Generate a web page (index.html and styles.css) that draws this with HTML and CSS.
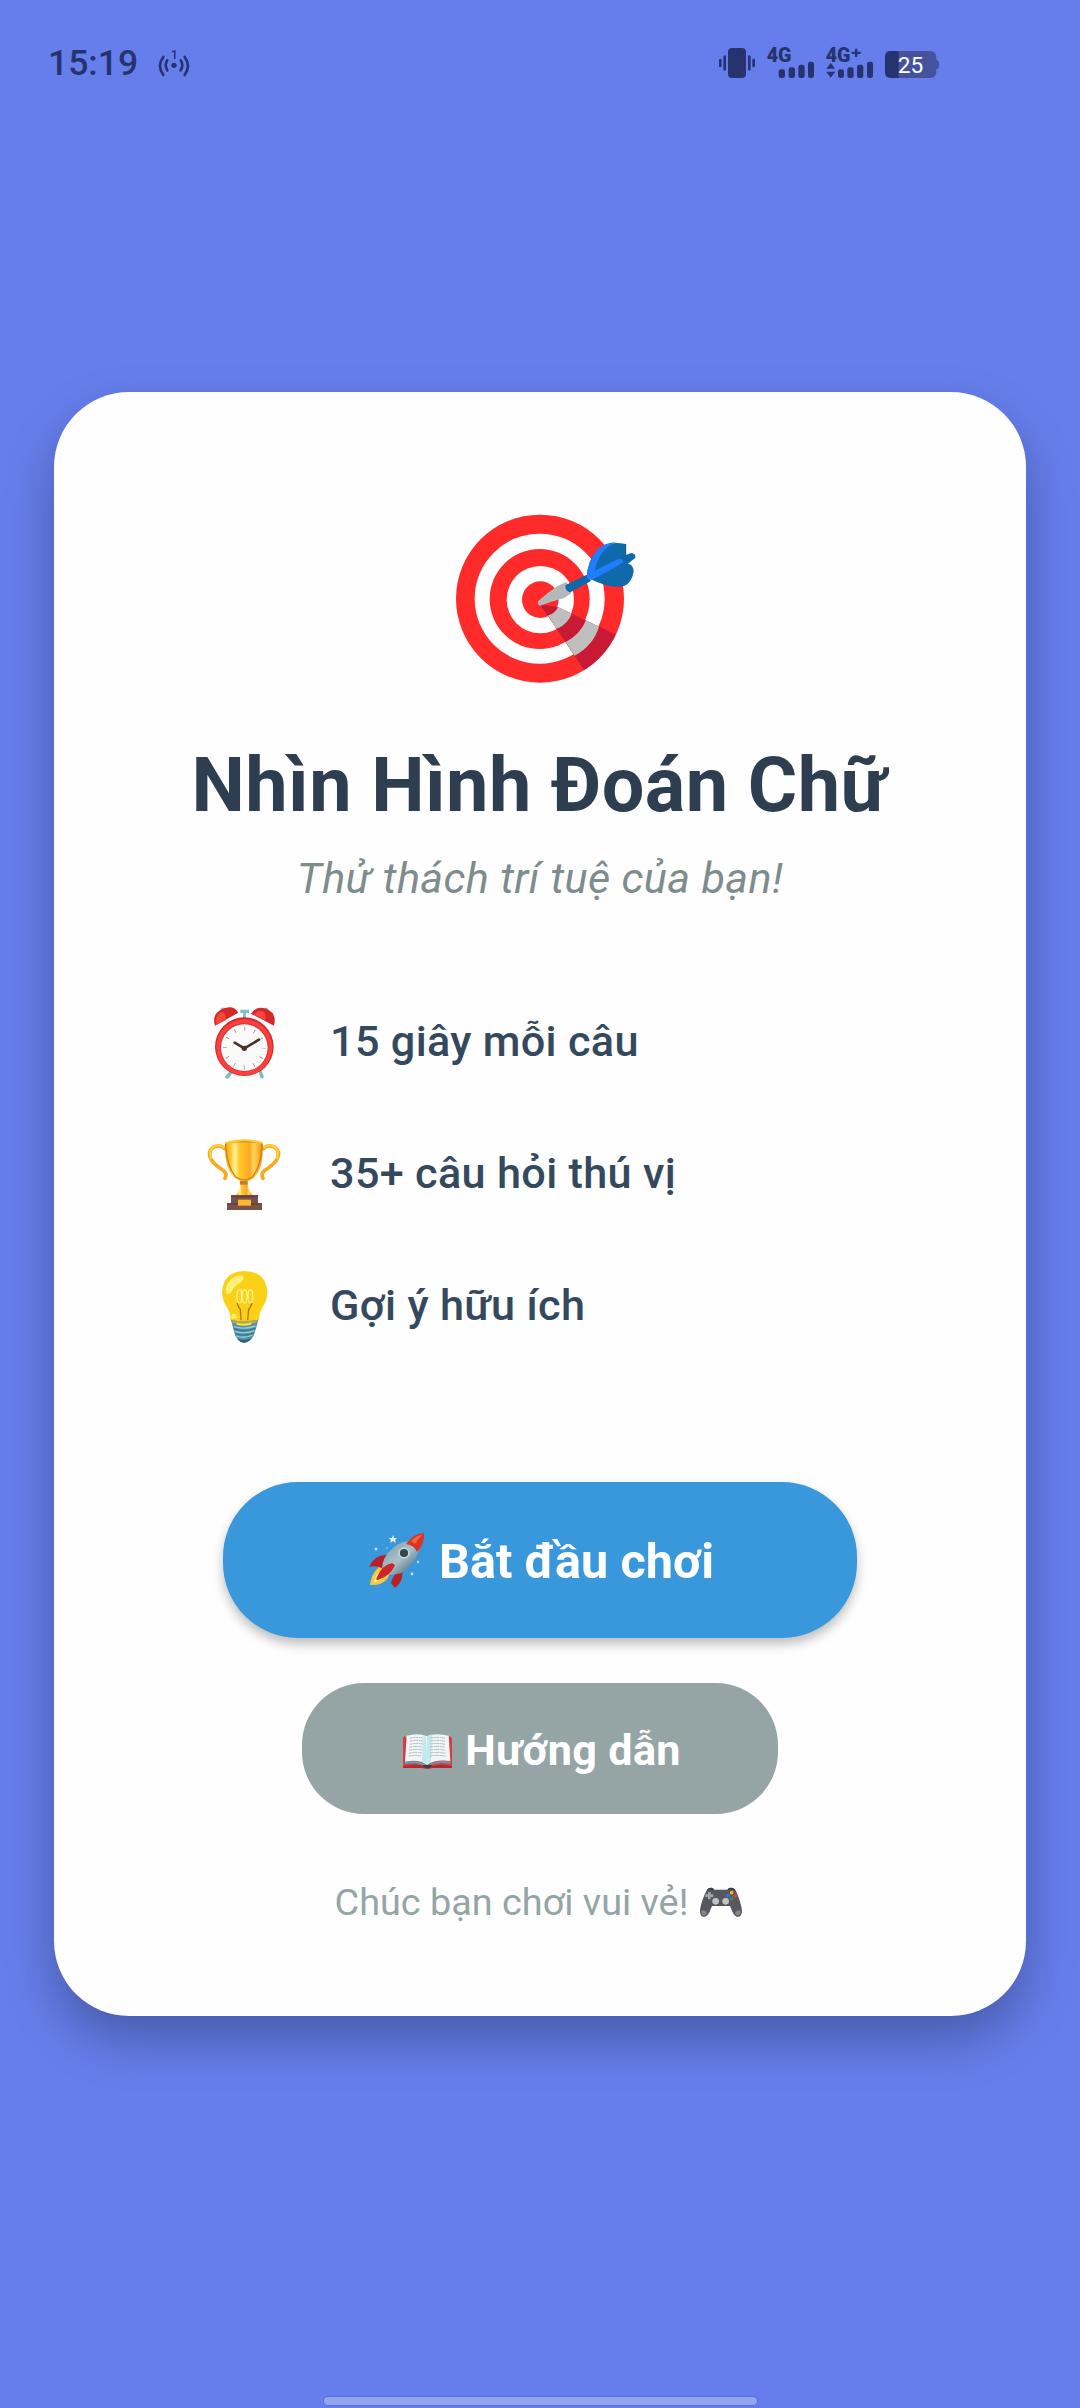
FILE: index.html
```html
<!DOCTYPE html>
<html lang="vi">
<head>
<meta charset="utf-8">
<title>Nhìn Hình Đoán Chữ</title>
<link rel="stylesheet" href="styles.css">
</head>
<body>
<div class="screen">
  <header class="status">
    <span class="time">15:19</span>
    <svg class="hotspot" viewBox="384 54 96 90" width="32" height="30">
      <circle cx="432" cy="106" r="8" fill="#27336e"/>
      <g fill="none" stroke="#27336e" stroke-width="8" stroke-linecap="round">
        <path d="M412 91Q402 105 412 121M452 91Q462 105 452 121M400 81Q380 107 400 135M464 81Q484 107 464 135"/>
      </g>
      <text x="422" y="88" class="tiny">1</text>
    </svg>
    <div class="status-right">
      <svg viewBox="60 54 108 90" width="36" height="30" fill="#27336e">
        <rect x="87" y="54" width="54" height="90" rx="12"/>
        <rect x="73" y="76" width="8" height="46" rx="4"/><rect x="60" y="86" width="8" height="26" rx="4"/>
        <rect x="147" y="76" width="8" height="46" rx="4"/><rect x="160" y="86" width="8" height="26" rx="4"/>
      </svg>
      <svg viewBox="204 54 141 90" width="47" height="30" fill="#27336e">
        <text x="203" y="97" class="net">4G</text>
        <rect x="239" y="118" width="19" height="26" rx="7"/><rect x="269" y="112" width="19" height="32" rx="7"/>
        <rect x="298" y="104" width="19" height="40" rx="7"/><rect x="327" y="95" width="18" height="49" rx="7"/>
      </svg>
      <svg viewBox="384 54 141 90" width="47" height="30" fill="#27336e">
        <text x="383" y="97" class="net">4G</text>
        <path d="M471 56h7v9h10v7H478v9h-7v-9H461v-7h10zM398 98l13 18H385zM385 125h27l-14 18z"/>
        <rect x="420" y="118" width="18" height="26" rx="7"/><rect x="448" y="112" width="19" height="32" rx="7"/>
        <rect x="477" y="104" width="19" height="40" rx="7"/><rect x="507" y="95" width="18" height="49" rx="7"/>
      </svg>
      <svg viewBox="555 54 162 90" width="54" height="30">
        <path d="M707 89q10 1 10 9v11q0 8-10 9z" fill="#45539d"/>
        <rect x="555" y="63" width="154" height="81" rx="17" fill="#45539d"/>
        <path d="M596 63H572q-17 0-17 17v47q0 17 17 17h24z" fill="#27336e"/>
        <text x="593" y="128" class="level">25</text>
      </svg>
    </div>
  </header>

  <main class="card">
    <svg class="target" viewBox="30 60 600 540" width="200" height="180">
      <defs><clipPath id="disc"><circle cx="330" cy="326" r="252"/></clipPath></defs>
      <circle cx="330" cy="326" r="252" fill="#ff2a2a"/>
      <circle cx="329" cy="326" r="195" fill="#fff"/>
      <circle cx="329" cy="327" r="150" fill="#ff2a2a"/>
      <circle cx="331" cy="329" r="101" fill="#fff"/>
      <circle cx="331" cy="329" r="55" fill="#ff2a2a"/>
      <g clip-path="url(#disc)">
        <path d="M328 342L385 352L600 454L474 558L352 375Z" fill="#c91a35"/>
        <path d="M384 351L425 371Q414 400 384 415L378 414L354 376Q376 371 384 351ZM468 391L507 410Q490 466 434 497L407 456Q450 435 468 391Z" fill="#bfbfbf"/>
      </g>
      <path d="M325 333Q350 309 384 287L410 275L424 310L403 324Q365 334 331 347Q321 344 325 333Z" fill="#b5b8bb"/>
      <path d="M406 286L470 254L483 273L421 307Q406 305 406 286Z" fill="#0d68a8"/>
      <path d="M470 265Q472 211 504 177Q535 151 587 162V195L604 189Q618 190 616 203L594 221Q610 223 611 245Q605 277 584 287Q546 300 476 265Z" fill="#1069aa"/>
      <path d="M470 265Q472 211 504 177Q525 158 558 157Q508 178 494 242L564 207Q579 204 579 215Q578 221 484 270Z" fill="#217dfb"/>
      <path d="M587 162V195L575 207" fill="none" stroke="#0b568f" stroke-width="3"/>
    </svg>

    <h1>Nhìn Hình Đoán Chữ</h1>
    <p class="tagline">Thử thách trí tuệ của bạn!</p>

    <ul class="features">
      <li>
        <svg viewBox="54 48 216 216" width="72" height="72">
          <path d="M91 60l4-7h9l3 8M224 60l-1-7h8l7 8M122 240l-17 20q0 9 11 5l16-22zM205 243l7 22q11 3 9-7l-8-20z" fill="#80b9c4"/>
          <path d="M151 59h26v10h-9v18h-9V69h-8z" fill="#84bec8"/>
          <path d="M75 107Q64 72 97 57Q130 43 145 68ZM252 107Q262 69 228 56Q199 46 183 71Z" fill="#d52827"/>
          <path d="M80 104Q73 78 94 65Q109 67 107 91ZM191 72Q210 57 222 66Q228 75 225 91Z" fill="#fa443e"/>
          <circle cx="163" cy="170" r="88" fill="#d52b2b"/>
          <circle cx="163" cy="172" r="84" fill="#fb4140"/>
          <circle cx="163" cy="172" r="73" fill="#d83431"/>
          <circle cx="163" cy="173" r="70" fill="#fafafa"/>
          <circle cx="163" cy="174" r="58" fill="none" stroke="#a1887f" stroke-width="12" pathLength="120" stroke-dasharray="0.8 9.2" stroke-dashoffset=".4"/>
          <path d="M134 158L163 175L207 149" fill="none" stroke="#4e2d2b" stroke-width="8" stroke-linecap="round" stroke-linejoin="round"/>
          <circle cx="163" cy="175" r="8" fill="#4e2d2b"/>
        </svg>
        <span>15 giây mỗi câu</span>
      </li>
      <li>
        <svg viewBox="54 54 216 216" width="72" height="72">
          <defs><linearGradient id="cup"><stop offset="0" stop-color="#f9a51f"/><stop offset=".15" stop-color="#ffc928"/><stop offset=".27" stop-color="#fff0a0"/><stop offset=".38" stop-color="#ffca28"/><stop offset=".65" stop-color="#ffa726"/><stop offset=".76" stop-color="#ffd557"/><stop offset="1" stop-color="#ef930f"/></linearGradient></defs>
          <g fill="none" stroke-linecap="round">
            <path d="M104 86Q89 71 70 82Q50 96 65 121Q75 136 98 150Q113 160 105 175M220 86Q235 71 254 82Q274 96 259 121Q249 136 226 150Q211 160 219 175" stroke="#f8a91d" stroke-width="11"/>
            <path d="M101 82Q86 70 70 81Q54 92 64 115M223 82Q238 70 254 81Q270 92 260 115" stroke="#ffd232" stroke-width="6"/>
          </g>
          <path d="M105 69Q162 49 218 69Q222 147 189 176Q163 192 136 176Q102 146 105 69Z" fill="url(#cup)"/>
          <path d="M107 73Q111 64 162 65Q212 64 216 73Q214 139 187 171Q163 188 137 171Q110 139 107 73Z" fill="none" stroke="#d28116" stroke-width="4"/>
          <path d="M106 69Q162 53 217 69" fill="none" stroke="#ffcb2e" stroke-width="6"/>
          <path d="M151 183h21l2 18q6 17 15 26h-54q14-12 15-26z" fill="url(#cup)"/>
          <path d="M150 183h23v11h-23z" fill="#c9792c"/>
          <path d="M123 226h81v24h12v20H111v-20h12z" fill="#79524c"/>
          <path d="M123 226h81v6h-81zM111 250h105v4H111z" fill="#654039"/>
          <path d="M144 239h39v18h-39z" fill="#fcb92d"/>
        </svg>
        <span>35+ câu hỏi thú vị</span>
      </li>
      <li>
        <svg viewBox="54 60 216 216" width="72" height="72">
          <path d="M122 207Q127 223 132 245Q139 275 163 278Q187 275 195 245L206 207Z" fill="#518faa"/>
          <path d="M96 127Q99 65 164 63Q229 65 232 127Q231 153 218 171Q207 189 206 209Q163 218 122 209Q121 187 110 171Q97 151 96 127Z" fill="#fdd018"/>
          <path d="M109 129Q103 111 119 92Q134 75 156 77Q169 82 151 98Q133 108 124 125Q115 137 109 129ZM125 193Q137 187 142 204L125 206Z" fill="#fff177"/>
          <g fill="none" stroke="#fff38d" stroke-width="4"><ellipse cx="148" cy="139" rx="7" ry="20"/><ellipse cx="164" cy="139" rx="7" ry="20"/><ellipse cx="181" cy="139" rx="7" ry="20"/></g>
          <path d="M141 159Q146 174 151 178L153 211M186 159Q181 174 176 178L173 211" fill="none" stroke="#b9750d" stroke-width="4"/>
          <path d="M124 210Q163 218 204 209L198 219Q163 225 128 219Z" fill="#b6a94a"/>
          <path d="M140 218Q165 225 186 217L183 224Q160 230 140 224Z" fill="#ffe23d"/>
          <path d="M132 230Q163 240 197 228M134 244Q163 254 193 242M139 258Q163 267 187 255" fill="none" stroke="#93cbda" stroke-width="4"/>
          <path d="M133 236Q163 248 196 235M137 250Q163 261 190 249" fill="none" stroke="#347080" stroke-width="3"/>
          <path d="M142 266Q163 275 184 264Q173 278 163 278Q151 278 142 266Z" fill="#2b6071"/>
        </svg>
        <span>Gợi ý hữu ích</span>
      </li>
    </ul>

    <button class="btn btn-play">
      <svg viewBox="0 0 62 62" width="62" height="62">
        <defs><linearGradient id="hull" x1="0" y1="0" x2="1" y2="1"><stop offset=".2" stop-color="#8fa7b2"/><stop offset=".5" stop-color="#a9c3cd"/><stop offset=".85" stop-color="#587583"/></linearGradient></defs>
        <path d="M13 36Q5 43 4 54Q16 55 22 47L25 38Z" fill="#fbc638"/>
        <path d="M14 40Q8 46 8 51Q16 50 20 43Z" fill="#fff29a"/>
        <path d="M21 24Q9 23 3 36Q11 34 18 38ZM33 39Q27 44 25 52L29 57Q39 49 36 36Z" fill="#b92025"/>
        <path d="M16 38Q16 26 27 17Q37 9 43 11L53 19Q49 33 36 42L25 44Z" fill="url(#hull)"/>
        <path d="M40 13Q48 2 58 2Q59 13 51 21Q48 14 40 13Z" fill="#db3525"/>
        <path d="M45 10Q52 3 56 4Q52 8 49 13Z" fill="#f36345"/>
        <circle cx="38" cy="22" r="5.8" fill="#c6d5da"/><circle cx="38" cy="22" r="4.1" fill="#37474f"/>
        <path d="M26 32Q16 34 11 46Q9 51 14 48Q25 44 29 34Z" fill="#cf2529"/>
        <path d="M27 4l1 3h3l-2 2 1 3-3-2-3 2 1-3-2-2h3z" fill="#e7f6ff"/>
        <g fill="#b9e4fb"><circle cx="10" cy="18" r="1.4"/><circle cx="52" cy="31" r="1.2"/><circle cx="46" cy="43" r="1.4"/><circle cx="21" cy="17" r=".7"/></g>
      </svg>
      <span>Bắt đầu chơi</span>
    </button>
    <button class="btn btn-guide">
      <svg viewBox="354 195 168 150" width="56" height="50">
        <path d="M366 234l5-6 67 88 67-88 8 6v90h-58q-8 0-16 3-9-3-16-3h-57z" fill="#d63c42"/>
        <path d="M367 319q43-9 60 0h24q26-9 61 0v5h-58l-15 2-15-2h-57z" fill="#a92d35"/>
        <path d="M372 306Q414 299 439 317Q465 299 509 305V311Q463 304 439 321Q411 304 371 312Z" fill="#52a8c2"/>
        <path d="M377 227Q415 217 438 229Q462 217 503 227L508 303Q465 297 439 314Q414 297 372 305Z" fill="#f0f6f7"/>
        <path d="M428 224Q438 227 438 314L423 307ZM438 229Q445 223 452 224L450 305L439 314Z" fill="#bfe8ef"/>
        <path d="M425 315h28q-1 7-14 10-13-4-14-10z" fill="#3b3d42"/>
        <g fill="none" stroke="#939ca0" stroke-width="2" stroke-dasharray="9 2 5 1">
          <path d="M386 235q18-5 40-1M386 244q18-5 40-1M386 253q18-5 40-1M385 262q18-5 39-1M384 271q18-5 40-1M383 280q18-5 40-1M383 289q18-5 38-1M449 234q22-4 43 1M449 243q22-4 43 1M449 252q22-4 44 1M448 261q22-4 45 1M448 270q22-4 46 1M448 279q22-4 47 1M447 288q22-4 49 1"/>
        </g>
      </svg>
      <span>Hướng dẫn</span>
    </button>

    <p class="wish">
      <span>Chúc bạn chơi vui vẻ!</span>
      <svg viewBox="1254 660 144 132" width="48" height="44">
        <path d="M1283 691Q1288 681 1301 684L1306 689H1345L1350 684Q1364 680 1370 691Q1386 727 1389 752Q1389 770 1376 771Q1367 770 1361 757L1353 738H1299L1291 757Q1285 770 1274 771Q1262 769 1263 750Q1267 722 1283 691Z" fill="#56575f"/>
        <path d="M1267 754Q1271 748 1278 752L1284 758Q1281 767 1273 767Q1267 765 1267 754ZM1385 754Q1381 748 1374 752L1368 758Q1371 767 1378 767Q1385 765 1385 754Z" fill="#85868b"/>
        <path d="M1283 691Q1288 681 1301 684L1306 689H1291ZM1370 691Q1364 680 1350 684L1345 689H1362Z" fill="#3b3c43"/>
        <path d="M1287 696h8v7h8v8h-8v7h-8v-7h-8v-8h8z" fill="#a5a6ab"/>
        <circle cx="1310" cy="724" r="10" fill="#c3c3c5"/><circle cx="1340" cy="724" r="10" fill="#c3c3c5"/>
        <circle cx="1358" cy="698" r="5.5" fill="#f3b51a"/><circle cx="1347" cy="707" r="5.5" fill="#2d75df"/><circle cx="1369" cy="708" r="5.5" fill="#e43a35"/><circle cx="1358" cy="716" r="5.5" fill="#28964b"/>
      </svg>
    </p>
  </main>

  <div class="home-bar"></div>
</div>
</body>
</html>
```
FILE: styles.css
```css
* { box-sizing: border-box; }

body {
  margin: 0;
  background: #657eeb;
  font-family: Roboto, "Noto Sans", sans-serif;
}

.screen {
  display: flex;
  flex-direction: column;
  align-items: center;
  width: 1080px;
  height: 2408px;
  overflow: hidden;
}

svg { display: block; flex: none; overflow: visible; }

.status {
  display: flex;
  align-items: center;
  align-self: stretch;
  height: 126px;
  padding: 0 141px 0 48px;
  color: #27336e;
}

.time {
  width: 110px;
  font-size: 35.5px;
  font-weight: 500;
}

.status-right {
  display: flex;
  gap: 12px;
  margin-left: auto;
}

.tiny { font-size: 38px; font-weight: 500; fill: #27336e; }
.net { font-size: 59px; font-weight: 900; }
.level { font-size: 68px; font-weight: 400; fill: #fff; }

.card {
  display: flex;
  flex-direction: column;
  align-items: center;
  width: 972px;
  height: 1624px;
  margin-top: 266px;
  padding-top: 118px;
  border-radius: 75px;
  background: #fefefe;
  box-shadow: 0 24px 50px rgba(0, 0, 0, 0.27);
}

h1 {
  width: 697px;
  margin: 50px 0 0;
  overflow: hidden;
  color: #2c3e50;
  font-size: 75.6px;
  font-weight: 700;
  letter-spacing: 0.45px;
  line-height: 90px;
  white-space: nowrap;
}

.tagline {
  margin: 24px 0 0;
  color: #7f8c8d;
  font-size: 43.2px;
  font-style: italic;
  letter-spacing: 0.36px;
  line-height: 50px;
}

.features {
  display: flex;
  flex-direction: column;
  align-self: stretch;
  gap: 60px;
  margin: 102px 0 0;
  padding: 0 0 0 154px;
  list-style: none;
}

.features li {
  display: flex;
  gap: 50px;
  color: #34495e;
  font-size: 43.2px;
  font-weight: 500;
  letter-spacing: 0.33px;
  line-height: 72px;
}

.btn {
  display: flex;
  flex: none;
  align-items: center;
  justify-content: center;
  padding: 3px 0 0;
  border: 0;
  color: #fff;
  font-family: inherit;
  font-weight: 700;
}

.btn-play {
  gap: 11px;
  width: 634px;
  height: 156px;
  margin-top: 140px;
  border-radius: 75px;
  background: #3998db;
  box-shadow: 0 6px 11px rgba(0, 0, 0, 0.26);
  font-size: 48.6px;
}

.btn-guide {
  gap: 10px;
  width: 476px;
  height: 131px;
  margin-top: 45px;
  border-radius: 62px;
  background: #95a5a5;
  font-size: 43.2px;
  letter-spacing: 0.3px;
}

.wish {
  display: flex;
  gap: 9px;
  margin: 66px 0 0;
  color: #95a5a6;
  font-size: 37.8px;
  line-height: 44px;
}

.home-bar {
  width: 433px;
  height: 8px;
  margin-top: 381px;
  border-radius: 4px;
  background: #93a5f0;
  box-shadow: 0 0 0 1px #5a6fd2;
}
```
